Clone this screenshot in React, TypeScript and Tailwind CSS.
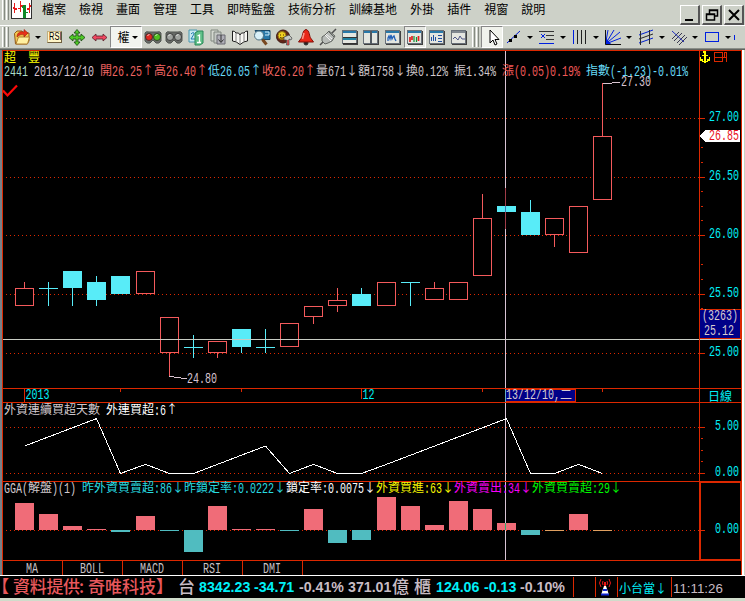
import React from "react";

const RED = "#dc2800";
const STEP = 24.1;
const cx = (i: number) => Math.round(24 + STEP * i);

/* Half-width characters take 6px, full-width ones 12px. */
function Grid({ children, className = "" }: { children: string; className?: string }) {
  const runs = children.match(/[\x20-\x7e]+|[^\x20-\x7e]+/g) ?? [];
  return (
    <span className={"inline-flex h-[14px] items-center whitespace-pre leading-[14px] " + className}>
      {runs.map((run, i) =>
        /^[\x20-\x7e]/.test(run) ? (
          <span key={i} className="inline-block h-[14px]" style={{ width: run.length * 6 }}>
            <span className="inline-block origin-left scale-x-[0.6667] font-['Liberation_Mono',monospace] text-[15px] leading-[14px]">
              {run}
            </span>
          </span>
        ) : (
          <span key={i} className="inline-block font-['Noto_Sans_CJK_TC',sans-serif] text-[12px] leading-[14px]">
            {run}
          </span>
        )
      )}
    </span>
  );
}

function Num({ x, y, children, fill = "#00f0f8" }: { x: number; y: number; children: string; fill?: string }) {
  return (
    <text
      transform={`translate(${x} ${y}) scale(0.6667 1)`}
      fill={fill}
      fontSize="15"
      fontFamily="'Liberation Mono', monospace"
    >
      {children}
    </text>
  );
}

type Candle = [kind: "up" | "down" | "flat", top: number, bottom: number, high: number, low: number];
const candles: Candle[] = [
  ["up", 288, 305, 282, 305],
  ["flat", 288, 288, 282, 305],
  ["down", 271, 287, 271, 305],
  ["down", 282, 299, 276, 305],
  ["down", 276, 293, 276, 293],
  ["up", 271, 293, 271, 293],
  ["up", 317, 352, 317, 376],
  ["flat", 347, 347, 335, 357],
  ["up", 341, 352, 341, 357],
  ["down", 329, 346, 329, 352],
  ["flat", 347, 347, 329, 352],
  ["up", 323, 346, 323, 346],
  ["up", 306, 316, 306, 323],
  ["up", 300, 305, 288, 311],
  ["down", 294, 305, 288, 305],
  ["up", 282, 305, 282, 305],
  ["flat", 282, 282, 282, 305],
  ["up", 288, 299, 282, 299],
  ["up", 282, 299, 282, 299],
  ["up", 218, 275, 194, 275],
  ["down", 206, 211, 206, 211],
  ["down", 212, 234, 200, 234],
  ["up", 218, 234, 218, 246],
  ["up", 206, 252, 206, 252],
  ["up", 136, 199, 83, 199],
];

const streak = [3, 4, 5, 6, 0, 1, 0, 0, 1, 2, 3, 0, 1, 0, 0, 1, 2, 3, 4, 5, 6, 0, 0, 1, 0];
const flows = [27, 16, 4, 1, -2, 14, -1, -22, 24, 1, 1, -1, 21, -13, -10, 33, 24, 5, 29, 21, 7, -5, 0, 16, 0];

function Dots({ y }: { y: number }) {
  return <line x1="6" x2="699" y1={y + 0.5} y2={y + 0.5} stroke={RED} strokeDasharray="1 3" />;
}

function PricePlot() {
  return (
    <svg className="block" width="696" height="337" viewBox="3 51 696 337" shapeRendering="crispEdges">
      {[118, 177, 235, 294, 353].map((y) => (
        <Dots key={y} y={y} />
      ))}
      <path d="M505.5 51V388" stroke="#d8c4d4" />
      {candles.map(([kind, top, bottom, high, low], i) => {
        const x = cx(i);
        const color = kind === "up" ? "#f45a5c" : "#58ecf8";
        return (
          <g key={i} fill={color}>
            {high < top && <rect x={x} y={high} width="1" height={top - high} />}
            {low > bottom && <rect x={x} y={bottom} width="1" height={low - bottom + 1} />}
            {kind === "flat" ? (
              <>
                <rect x={x - 9} y={top} width="19" height="1" />
                <rect x={x} y={high} width="1" height={low - high + 1} />
              </>
            ) : (
              <rect
                x={x - 8.5}
                y={top + 0.5}
                width="18"
                height={bottom - top}
                fill={kind === "up" ? "#000" : color}
                stroke={color}
              />
            )}
          </g>
        );
      })}
      <path d="M505.5 188V206M505.5 212V229" stroke="#a03c48" />
      <path d="M505.5 206V212" stroke="#3878b0" />
      <path d="M3 339.5H699" stroke="#c8ccc4" />
      <path d="M603 83.5H612M612 82.5H620M169 376.5H174M174 377.5H181M181 378.5H187" stroke="#d8c4d0" />
      <Num x={621} y={86} fill="#d8c4d0">27.30</Num>
      <Num x={187} y={383} fill="#d8c4d0">24.80</Num>
    </svg>
  );
}

function PriceAxis() {
  return (
    <svg className="block" width="41" height="337" viewBox="700 51 41 337" shapeRendering="crispEdges">
      {[118, 177, 235, 294, 353].map((y) => (
        <path key={y} d={`M700 ${y + 0.5}h5`} stroke={RED} />
      ))}
      {[147, 162, 191, 206, 220, 264, 279, 308].map((y) => (
        <path key={y} d={`M701 ${y + 0.5}h2`} stroke={RED} />
      ))}
      <Num x={709} y={121}>27.00</Num>
      <Num x={709} y={180}>26.50</Num>
      <Num x={709} y={238}>26.00</Num>
      <Num x={709} y={297}>25.50</Num>
      <Num x={709} y={356}>25.00</Num>
      <path d="M700 136l5-6h35v12h-35z" fill="#fff" />
      <Num x={709} y={140} fill="#e81020">26.85</Num>
      <rect x="699.5" y="309.5" width="41" height="29" fill="#000088" stroke={RED} />
      <Num x={702} y={320} fill="#d8ccd0">(3263)</Num>
      <Num x={704} y={335} fill="#d8ccd0">25.12</Num>
      <path d="M700 339.5H741" stroke="#c8ccc4" />
      <path
        d="M703 51h3v2h-3zM704 53h2v9h-2zM702 55h6v1h-6zM700 57h1v2h-1zM709 57h1v2h-1zM700 59h3v2h-3zM707 59h3v2h-3zM702 61h6v1h-6zM704 62h2v1h-2z"
        fill="#ffff00"
      />
      <path d="M714.5 52.5h8v9h-8zM714 57.5h12M724.5 52v5M724 52.5h2.500M726.5 52v10" stroke={RED} fill="none" />
    </svg>
  );
}

function StreakPlot() {
  return (
    <svg className="block" width="696" height="78" viewBox="3 403 696 78" shapeRendering="crispEdges">
      <Dots y={427} />
      <Dots y={473} />
      <path d="M505.5 403V481" stroke="#d8c4d4" />
      <polyline
        points={streak.map((v, i) => `${cx(i) + 0.5},${473.5 - v * 9.15}`).join(" ")}
        fill="none"
        stroke="#fff"
      />
    </svg>
  );
}

function FlowPlot() {
  return (
    <svg className="block" width="696" height="78" viewBox="3 482 696 78" shapeRendering="crispEdges">
      <Dots y={530} />
      {flows.map((v, i) => (
        <rect
          key={i}
          x={cx(i) - 9}
          y={v > 0 ? 530 - v : 530}
          width="19"
          height={Math.max(1, Math.abs(v))}
          fill={v > 0 ? "#f06c78" : v < 0 ? "#50bcc0" : "#e0a060"}
        />
      ))}
      <path d="M505.5 482V560" stroke="#d8c4d4" />
      <path d="M505.5 523V530" stroke="#38b070" />
    </svg>
  );
}

function SubAxis({ top, children }: { top: number; children: React.ReactNode }) {
  return (
    <svg className="block" width="41" height="78" viewBox={`700 ${top} 41 78`} shapeRendering="crispEdges">
      {children}
    </svg>
  );
}

function Icon({ children }: { children: React.ReactNode }) {
  return (
    <svg className="shrink-0" width="20" height="18" viewBox="0 0 20 18" fill="none" stroke="#303030">
      {children}
    </svg>
  );
}

function Tool({ w = "w-[21.9px]", children }: { w?: string; children: React.ReactNode }) {
  return <div className={"flex h-full shrink-0 items-center justify-center " + w}>{children}</div>;
}

function Caret() {
  return (
    <div className="flex w-[11px] shrink-0 items-center justify-center">
      <div className="h-0 w-0 border-x-[3px] border-t-[3px] border-x-transparent border-t-black" />
    </div>
  );
}

function Grip() {
  return (
    <div className="flex h-[20px] w-[11px] shrink-0 items-center justify-center gap-[1px]">
      <div className="h-full w-[3px] border-l border-r border-l-white border-r-[#858a82]" />
      <div className="h-full w-[3px] border-l border-r border-l-white border-r-[#858a82]" />
    </div>
  );
}

const WindowIcon = ({ kind }: { kind: "rows" | "cols" | "bars" | "candles" | "table" | "wave" }) => (
  <Icon>
    <g shapeRendering="crispEdges">
      <path d="M3 16.5h14.500V3" stroke="#404040" strokeWidth="1.5" />
      <rect x="2.5" y="2.5" width="14" height="13" fill="#e4e6e0" stroke="#687078" />
      <path d="M3 4h13" stroke={kind === "wave" ? "#808890" : "#2878a8"} strokeWidth="2" />
      {kind === "rows" && <path d="M3 11h13" stroke="#2080a0" strokeWidth="2" />}
      {kind === "rows" && <path d="M3 9.5h14M3 15.5h14" stroke="#333" />}
      {kind === "cols" && <path d="M9.500 3v13" stroke="#505860" strokeWidth="2" />}
    </g>
    {kind === "bars" && <path d="M5 13v-3l1-2 1 3 1-4 1 4 1-2 1-1 1 3 1 2" stroke="#2060b8" strokeWidth="1.3" />}
    {kind === "candles" && (
      <>
        <path d="M5 14V9M7 12V8M13.500 13V8" stroke="#e02020" strokeWidth="1.7" />
        <path d="M9 14V8M11.500 14V9" stroke="#109030" strokeWidth="1.2" />
      </>
    )}
    {kind === "table" && <path d="M4.500 13V9M6.500 13V7M8.500 13V9M11 7.500h4M11 10.500h4M11 13.500h4" stroke="#2050a0" />}
    {kind === "wave" && <path d="M4 11l2-2 3 3 2-4 2 3h3" stroke="#505888" />}
  </Icon>
);

function Toolbar() {
  return (
    <div className="flex h-[22px] items-center">
      <Grip />
      <Tool>
        <Icon>
          <path d="M2.500 5.500L5 3h5l1 2h6v8l-2 3H3.500z" fill="#f4c850" stroke="#905818" />
          <path d="M6.500 9h11l-2 7H4z" fill="#fff0a0" stroke="#b08030" />
          <path d="M5 9c0-5 4-6 7-5V1.500L16 5l-4 4V7C9 6 7 7 5 9z" fill="#e83018" stroke="#982010" strokeWidth=".6" />
        </Icon>
      </Tool>
      <Caret />
      <Tool>
        <span className="flex h-[12px] w-[15px] items-center justify-center border border-b-[#706040] border-l-[#c0b080] border-r-[#706040] border-t-[#c0b080] bg-[#fff6c8] text-black">
          <span className="scale-x-75 font-['Liberation_Sans',sans-serif] text-[10px] leading-none">RSI</span>
        </span>
      </Tool>
      <Tool>
        <Icon>
          <path
            d="M10 1.500l3 3.500h-2v3h3V6l4 3.500-4 3.500v-2h-3v3h2l-3 3.500L7 14h2v-3H6v2L2 9.500 6 6v2h3V5H7z"
            fill="#50c828"
            stroke="#184810"
            strokeWidth=".8"
          />
        </Icon>
      </Tool>
      <Tool>
        <Icon>
          <path d="M3 9.500L7 6v2h7V6l4 3.500L14 13v-2H7v2z" fill="#f04860" stroke="#582028" strokeWidth=".8" />
        </Icon>
      </Tool>
      <div className="flex h-[22px] w-[32px] shrink-0 items-center justify-end border border-[#888] border-b-white border-r-white bg-[#f2f4ef] text-black">
        <span className="font-['Noto_Sans_CJK_TC',sans-serif] text-[12px] leading-none">權</span>
        <Caret />
      </div>
      {[["#e02820", "#50c020"], ["#a0a4a0", "#a0a4a0"]].map(([a, b], i) => (
        <Tool key={i}>
          <Icon>
            <path d="M2 5q1-2 4-1h8q3-1 4 1v8q-2 3-5 2l-3-3-3 3q-3 1-5-2z" fill="#686c68" stroke="#505450" />
            <circle cx="6" cy="9" r="3.500" fill={a} stroke="#222" strokeWidth=".7" />
            <circle cx="14" cy="9" r="3.500" fill={b} stroke="#222" strokeWidth=".7" />
            <path d="M4.500 8q.5-1.500 2-1.500M12.500 8q.5-1.500 2-1.500" stroke="#f0f0f0" strokeWidth=".8" />
          </Icon>
        </Tool>
      ))}
      <Tool>
        <Icon>
          <path d="M3 2h8v12H3z" fill="#c8e8f0" stroke="#4898b0" />
          <path d="M5 6q3-3 3 0l-3 5h4" stroke="#2080b0" />
          <path d="M9 5l3-2h5v12l-3 2H9z" fill="#60c088" stroke="#288858" />
          <path d="M11.500 8l2-1v7M11 14.500h4" stroke="#fff" strokeWidth="1.3" />
        </Icon>
      </Tool>
      <Tool>
        <Icon>
          <path d="M3 2h7v11H3z" fill="#d4d8d0" stroke="#808880" />
          <path d="M6 4h7v11H6z" fill="#c4c8c4" stroke="#808880" />
          <path d="M9 7h8v9H9z" fill="#b0b0b8" stroke="#686870" />
          <path d="M13 7v7M10.500 11.500l2.500 3 2.500-3" stroke="#333" />
        </Icon>
      </Tool>
      <Tool>
        <Icon>
          <path d="M2.500 3Q5 3 6 5q3-1 4 2 1-3 4-2 1-2 3.500-2v10Q14 13 10 16.500 6 13 2.500 13z" fill="#f8f8f4" stroke="#202020" />
          <path d="M10 7v9M6 5v8M14 5v8" stroke="#808080" />
        </Icon>
      </Tool>
      <Tool>
        <Icon>
          <path d="M3 2.500h15v9H9z" fill="#2878a8" stroke="#184868" />
          <path d="M13 4h4v3M13 7h4" stroke="#d0f0ff" />
          <circle cx="7" cy="7.500" r="4.500" fill="#d8f0f8" stroke="#507080" />
          <path d="M10.500 11.500l4 5" stroke="#784820" strokeWidth="3" />
        </Icon>
      </Tool>
      <Tool>
        <Icon>
          <circle cx="9" cy="8.500" r="6.500" fill="#602418" stroke="#401810" />
          <circle cx="8" cy="7.500" r="4" fill="#f0d020" stroke="#907010" />
          <path d="M6 7h1M9 7h1M6 9.500q2 1.500 4 0" stroke="#503000" />
          <path d="M10 9l5-2 3 3-1 2-2-1v6h-2.500v-5L10 12z" fill="#c4c8c4" stroke="#444" strokeWidth=".7" />
          <path d="M14 12v5" stroke="#c83030" strokeWidth="1.5" />
        </Icon>
      </Tool>
      <Tool>
        <Icon>
          <circle cx="10" cy="15" r="2" fill="#252525" />
          <path d="M10 1.500c4 1 3 7 5 9l2.500 3.500h-15L5 10.500c2-2 1-8 5-9z" fill="#e82818" stroke="#801008" />
          <path d="M8 5l-1.500 6" stroke="#ff9888" strokeWidth="1.500" />
        </Icon>
      </Tool>
      <Tool>
        <Icon>
          <path d="M2 17l5-5M13 6l5-5" stroke="#505050" strokeWidth="1.5" />
          <path d="M4 9l3-2 4-4 6 5-3 5-4 2-3 1-3-3z" fill="#b8bcb8" stroke="#606460" />
          <path d="M7 7l6 6M8 6l6 5" stroke="#f4f4f4" />
          <path d="M11 4l5 5" stroke="#606460" />
        </Icon>
      </Tool>
      <Tool><WindowIcon kind="rows" /></Tool>
      <Tool><WindowIcon kind="cols" /></Tool>
      <Tool><WindowIcon kind="bars" /></Tool>
      <Tool w="w-[22px] border border-[#888] border-b-white border-r-white bg-[#e6e8e2]"><WindowIcon kind="candles" /></Tool>
      <Tool><WindowIcon kind="table" /></Tool>
      <Tool><WindowIcon kind="wave" /></Tool>
      <Grip />
      <Tool w="w-[22px] border border-[#888] border-b-white border-r-white bg-[#f0f2ec]">
        <Icon>
          <path d="M8 2v13l3-3 2 5 2-1-2-4.500h4z" fill="#fff" stroke="#000" />
        </Icon>
      </Tool>
      <DrawTool>
        <path d="M3 15L16 3" stroke="#0018d0" />
        <path d="M5 11h3v3H5zM10 7h3v3h-3z" fill="#000" stroke="none" />
      </DrawTool>
      <DrawTool>
        <path d="M2 3.500h15M9 7.500h8M9 11.500h8" stroke="#333" />
        <path d="M2 15.500h15M4 6l4 4M8 6l-4 4" stroke="#0020e0" />
      </DrawTool>
      <DrawTool>
        <path d="M7.500 2v14M11.500 2v14M15.500 2v14" stroke="#202020" />
        <path d="M3.500 2v14" stroke="#0020e0" />
      </DrawTool>
      <DrawTool>
        <path d="M2.500 16L5 2M2.500 16L11 2M2.500 16L17 4M2.500 16L18 10" stroke="#0020e0" />
        <path d="M2.500 2v14.500H18" stroke="#101010" />
        <path d="M3 10l5 6H3z" fill="#0020e0" stroke="none" />
      </DrawTool>
      <DrawTool>
        <path d="M3 7l14-5M3 15l14-5" stroke="#0020d0" />
        <path d="M3 11l14-5M4.500 3v14M13.500 2v14" stroke="#282828" />
      </DrawTool>
      <DrawTool>
        <path d="M3 11l7-7M5 13l8-8M8 15l8-8M10 17l8-8" stroke="#383850" />
        <path d="M3 3l12 11" stroke="#2030c0" />
      </DrawTool>
      <DrawTool>
        <rect x="3.500" y="4.500" width="13" height="9" stroke="#0020e0" />
      </DrawTool>
      <div className="h-[5px] w-[1px] shrink-0 bg-[#0020e0]" />
    </div>
  );
}

function DrawTool({ children }: { children: React.ReactNode }) {
  return (
    <div className="flex w-[33px] shrink-0 items-center">
      <div className="flex w-[21px] justify-center">
        <Icon>{children}</Icon>
      </div>
      <Caret />
    </div>
  );
}

function WindowButton({ children }: { children: React.ReactNode }) {
  return (
    <div className="flex h-[20px] w-[20px] items-center justify-center border border-b-2 border-r-2 border-b-[#555] border-l-white border-r-[#555] border-t-white bg-[#cdd1c8]">
      <svg width="14" height="14" viewBox="0 0 14 14" fill="none" stroke="#000">
        {children}
      </svg>
    </div>
  );
}

const menus = ["檔案", "檢視", "畫面", "管理", "工具", "即時監盤", "技術分析", "訓練基地", "外掛", "插件", "視窗", "說明"];

function MenuBar() {
  return (
    <div className="flex h-[25px] items-start">
      <Grip />
      <svg className="shrink-0 bg-white" width="21" height="19" viewBox="0 0 21 19" shapeRendering="crispEdges">
        <path d="M3 3h1v10H3zM2 7h1v2H2zM4 8h2v2H4zM9 1h1v11H9zM7 8h2v1H7zM10 5h2v2h-2zM18 3h1v10h-1zM16 8h2v2h-2zM19 5h2v2h-2z" fill="#e81818" />
        <path d="M12 5h3v13h-3zM11 6h1v2h-1zM15 12h2v1h-2z" fill="#108828" />
        <path d="M.5 0v18.500h20V0" stroke="#303030" fill="none" />
      </svg>
      <div className="flex gap-[13px] pl-[10px] pt-[1px] font-['Noto_Sans_CJK_TC',sans-serif] text-[12px] leading-[16px] text-black">
        {menus.map((m) => (
          <span key={m} className="whitespace-nowrap">{m}</span>
        ))}
      </div>
      <div className="ml-auto flex gap-[2px] pr-[1px] pt-[5px]">
        <WindowButton><path d="M2 12h8" strokeWidth="2" /></WindowButton>
        <WindowButton>
          <path d="M4.500 6V2h8v6H9M4 2.500h9" strokeWidth="1.5" />
          <path d="M1.500 6h8v6h-8zM1.500 6.500h8" strokeWidth="1.5" />
        </WindowButton>
        <WindowButton><path d="M2 2l10 10M12 2L2 12" strokeWidth="2" /></WindowButton>
      </div>
    </div>
  );
}

function StatusText({ w, className, children }: { w: string; className: string; children: string }) {
  return <span className={"shrink-0 whitespace-pre " + w + " " + className}>{children}</span>;
}

function StatusBar() {
  const cjk = "font-['Noto_Sans_CJK_TC',sans-serif] font-medium text-[17px] leading-[18px] pb-[2px]";
  const up = "text-[#00f0f8]";
  const gray = "text-[#c8bcc4]";
  return (
    <div className="flex h-[22px] items-center overflow-hidden bg-black font-['Liberation_Sans',sans-serif] text-[14.2px] font-bold leading-[20px]">
      <div className={"flex w-[178px] shrink-0 text-[#e8585c] " + cjk}>
        <span className="-ml-[8px] w-[21px] whitespace-nowrap">【</span>
        <span className="w-[66px] whitespace-nowrap tracking-[-0.3px]">資料提供</span>
        <span className="w-[9px]">:</span>
        <span className="w-[68px] whitespace-nowrap">奇唯科技</span>
        <span>】</span>
      </div>
      <StatusText w="w-[21px]" className={gray + " " + cjk}>台</StatusText>
      <StatusText w="w-[55px]" className={up}>8342.23</StatusText>
      <StatusText w="w-[45px]" className={up}>-34.71</StatusText>
      <StatusText w="w-[49px]" className={gray}>-0.41%</StatusText>
      <StatusText w="w-[44px]" className={gray}>371.01</StatusText>
      <StatusText w="w-[22px]" className={gray + " " + cjk}>億</StatusText>
      <StatusText w="w-[22px]" className={gray + " " + cjk}>櫃</StatusText>
      <StatusText w="w-[48px]" className={up}>124.06</StatusText>
      <StatusText w="w-[36px]" className={up}>-0.13</StatusText>
      <StatusText w="w-[53px]" className={gray}>-0.10%</StatusText>
      <div className="h-[20px] w-[22px] shrink-0 border-l border-[#dc2800]" />
      <div className="flex h-[20px] w-[22px] shrink-0 items-center justify-center border-l border-[#dc2800] pr-[3px]">
        <svg width="14" height="18" viewBox="0 0 14 18" fill="none">
          <path d="M3 1Q0 5 3 9M11 1q3 4 0 8M5 3q-1 2 0 4M9 3q1 2 0 4" stroke="#e81818" />
          <path d="M7 4v4" stroke="#e81818" strokeWidth="2" />
          <path d="M6 8h2l3 9H3z" fill="#fff" />
          <path d="M5 12h4M3 16.500h8" stroke="#1028d0" strokeWidth="2" />
        </svg>
      </div>
      <div className="flex h-[20px] w-[54px] shrink-0 items-center whitespace-nowrap border-l border-[#dc2800] pl-[1px] pt-[1px] font-['Noto_Sans_CJK_TC',sans-serif] text-[12px] font-normal text-[#00f0f8]">
        小台當↓
      </div>
      <div className="flex h-[20px] grow items-center border-l border-[#dc2800] pl-[1px] pt-[4px] text-[13.3px] font-normal text-[#c8bcc4]">
        11:11:26
      </div>
    </div>
  );
}

export default function App() {
  return (
    <div className="flex h-[601px] w-[745px] flex-col overflow-hidden bg-[#cdd1c8]">
      <MenuBar />
      <div className="h-[24px] border-b border-t border-b-[#8a8e88] border-t-white">
        <Toolbar />
      </div>
      <div className="flex h-[526px] border-t border-[#606460]">
        <div className="w-[2px] shrink-0 bg-[#788088]" />
        <div className="flex w-[740px] shrink-0 flex-col border-x border-t border-[#dc2800] bg-black">
          <div className="flex h-[337px]">
            <div className="relative w-[696px]">
              <PricePlot />
              <div className="absolute left-[1px] top-[-1px] font-['Noto_Sans_CJK_TC',sans-serif] text-[12px] leading-[13px] text-[#ffff00]">
                超　豐
              </div>
              <div className="absolute left-[1px] top-[12px] flex">
                <Grid className="w-[30px] text-[#a8dcc8]">2441</Grid>
                <Grid className="w-[66px] text-[#d8c4d0]">2013/12/10</Grid>
                <Grid className="w-[54px] text-[#f06460]">開26.25↑</Grid>
                <Grid className="w-[54px] text-[#f06460]">高26.40↑</Grid>
                <Grid className="w-[54px] text-[#68dcf8]">低26.05↑</Grid>
                <Grid className="w-[54px] text-[#f06460]">收26.20↑</Grid>
                <Grid className="w-[42px] text-[#d0c8cc]">量671↓</Grid>
                <Grid className="w-[48px] text-[#d0c8cc]">額1758↓</Grid>
                <Grid className="w-[48px] text-[#d0c8cc]">換0.12%</Grid>
                <Grid className="w-[48px] text-[#d0c8cc]">振1.34%</Grid>
                <Grid className="w-[84px] text-[#f05858]">漲(0.05)0.19%</Grid>
                <Grid className="text-[#68dcf8]">指數(-1.23)-0.01%</Grid>
              </div>
              <svg className="absolute left-0 top-[33px]" width="16" height="14" viewBox="0 0 16 14" fill="none">
                <path d="M0 6.500l4.500 5L14 1.500" stroke="#ff0808" strokeWidth="2.200" />
              </svg>
            </div>
            <div className="w-[42px] border-l border-[#dc2800]"><PriceAxis /></div>
          </div>
          <div className="flex h-[15px] border-y border-[#dc2800]">
            <svg className="block" width="696" height="13" viewBox="3 389 696 13" shapeRendering="crispEdges">
              <path d="M24.500 389v13M120.500 389v3M241.500 389v3M361.500 389v10M482.500 389v3M602.500 389v3" stroke={RED} />
              <Num x={25.5} y={399}>2013</Num>
              <Num x={362.5} y={399}>12</Num>
              <path d="M505.500 389h70v12h-70z" fill="#000088" stroke={RED} />
              <Num x={506} y={399} fill="#d8ccd0">13/12/10,</Num>
              <text x="560" y="399" fill="#d8ccd0" fontSize="12" fontFamily="'Noto Sans CJK TC', sans-serif">二</text>
              <path d="M505.500 389v13" stroke="#68b0c8" />
            </svg>
            <div className="flex w-[42px] items-center border-l border-[#dc2800] pl-[8px] font-['Noto_Sans_CJK_TC',sans-serif] text-[12px] leading-[13px] text-[#00f0f8]">
              日線
            </div>
          </div>
          <div className="flex h-[78px]">
            <div className="relative w-[696px]">
              <StreakPlot />
              <div className="absolute left-[1px] top-[-1px] flex gap-[6px]">
                <Grid className="text-[#d0c8cc]">外資連續買超天數</Grid>
                <Grid className="text-white">外連買超:6↑</Grid>
              </div>
            </div>
            <div className="w-[42px] border-l border-[#dc2800]">
              <SubAxis top={403}>
                <path d="M700 427.500h5M700 473.500h5M701 438.500h2M701 450.500h2M701 461.500h2" stroke={RED} />
                <Num x={715} y={430}>5.00</Num>
                <Num x={715} y={476}>0.00</Num>
              </SubAxis>
            </div>
          </div>
          <div className="flex h-[79px] border-t border-[#dc2800]">
            <div className="relative w-[696px]">
              <FlowPlot />
              <div className="absolute left-[1px] top-[-2px] flex">
                <Grid className="w-[78px] text-[#d0c8cc]">GGA(解盤)(1)</Grid>
                <Grid className="w-[102px] text-[#28dce0]">昨外資買賣超:86↓</Grid>
                <Grid className="w-[102px] text-[#28dce0]">昨鎖定率:0.0222↓</Grid>
                <Grid className="w-[90px] text-white">鎖定率:0.0075↓</Grid>
                <Grid className="w-[78px] text-[#f8f800]">外資買進:63↓</Grid>
                <Grid className="w-[78px] text-[#f800f8]">外資賣出:34↓</Grid>
                <Grid className="text-[#00f800]">外資買賣超:29↓</Grid>
              </div>
            </div>
            <div className="w-[42px] border-l border-[#dc2800]">
              <SubAxis top={482}>
                <path d="M700 482.500H740.500V559.500H700.500V482M700 530.500h5" stroke={RED} fill="none" />
                <Num x={715} y={533}>0.00</Num>
              </SubAxis>
            </div>
          </div>
          <div className="flex h-[15px] border-t border-[#dc2800]">
            {["MA", "BOLL", "MACD", "RSI", "DMI"].map((tab) => (
              <div key={tab} className="flex w-[60px] items-start justify-center border-r border-[#dc2800] pr-[2px] text-[#c8c0c4]">
                <Grid className="-mt-[1px]">{tab}</Grid>
              </div>
            ))}
          </div>
        </div>
        <div className="w-[3px] shrink-0 border-r border-[#c8d4c0] bg-white" />
      </div>
      <div className="h-[1px] bg-white" />
      <StatusBar />
      <div className="grow bg-[#d0dccb]" />
    </div>
  );
}
